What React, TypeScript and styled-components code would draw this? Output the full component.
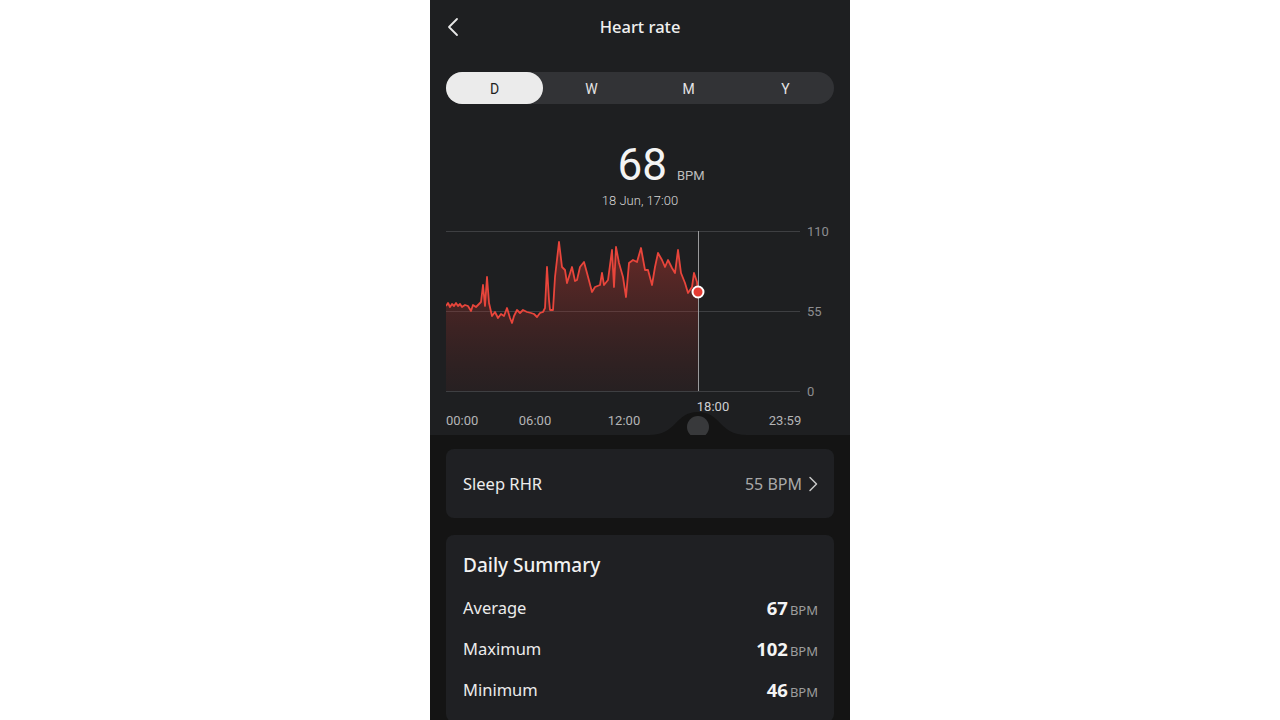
import styled, { createGlobalStyle } from "styled-components";
import { useState } from "react";

const GlobalStyle = createGlobalStyle`
  html, body {
    margin: 0;
    padding: 0;
    background: #ffffff;
  }
  * {
    box-sizing: border-box;
  }
`;

const Phone = styled.div`
  width: 420px;
  height: 720px;
  margin: 0 auto;
  background: #141414;
  overflow: hidden;
  font-family: "Noto Sans", Roboto, sans-serif;
  color: #ececec;
`;

const TopPanel = styled.section`
  background: #1e1f21;
  padding: 0 16px;
  display: flex;
  flex-direction: column;
`;

const Header = styled.header`
  height: 54px;
  display: grid;
  grid-template-columns: 40px 1fr 40px;
  align-items: center;
`;

const BackButton = styled.button`
  border: none;
  background: none;
  padding: 0;
  width: 24px;
  height: 24px;
  color: #e8e8e8;
  display: flex;
  align-items: center;
  cursor: pointer;
`;

const Title = styled.h1`
  margin: 0;
  text-align: center;
  font-size: 16.5px;
  font-weight: 500;
  color: #f0f0f0;
  padding-bottom: 1px;
`;

const Segmented = styled.div`
  margin-top: 18px;
  height: 32px;
  border-radius: 16px;
  background: #323336;
  display: grid;
  grid-template-columns: repeat(4, 1fr);
`;

const Segment = styled.button<{ $active: boolean }>`
  border: none;
  border-radius: 16px;
  padding: 2px 0 0;
  font-family: Roboto, "Noto Sans", sans-serif;
  font-size: 14px;
  background: ${(p) => (p.$active ? "#ebebeb" : "transparent")};
  color: ${(p) => (p.$active ? "#1e1e1e" : "#e4e4e4")};
  cursor: pointer;
`;

const Reading = styled.div`
  margin-top: 35px;
  display: flex;
  flex-direction: column;
  align-items: center;
`;

const ValueLine = styled.div`
  display: flex;
  align-items: baseline;
  gap: 10px;
  padding-left: 42px;
  font-family: Roboto, sans-serif;
`;

const BigValue = styled.span`
  font-size: 44px;
  line-height: 52px;
  font-weight: 400;
  color: #f4f4f4;
`;

const Unit = styled.span`
  font-size: 13px;
  color: #bdbdbd;
`;

const DateText = styled.div`
  margin-top: 2px;
  font-family: Roboto, sans-serif;
  font-size: 13px;
  font-weight: 300;
  color: #d6d6d6;
`;

const ChartSvg = styled.svg`
  display: block;
  margin-top: 17px;
  font-family: Roboto, sans-serif;
`;

const Lower = styled.section`
  padding: 14px 16px;
  display: flex;
  flex-direction: column;
  gap: 17px;
`;

const Card = styled.div`
  background: #1f2023;
  border-radius: 8px;
  padding: 0 16px 0 17px;
`;

const LinkRow = styled.div`
  height: 69px;
  display: flex;
  align-items: center;
  justify-content: space-between;
`;

const RowLabel = styled.span`
  font-size: 16.5px;
  color: #ececec;
`;

const LinkValue = styled.span`
  display: flex;
  align-items: center;
  gap: 6px;
  font-size: 16px;
  color: #a9a9a9;
`;

const SummaryTitle = styled.h2`
  margin: 0;
  padding-top: 17px;
  height: 52px;
  font-size: 19px;
  font-weight: 500;
  color: #f2f2f2;
`;

const SummaryRow = styled.div`
  height: 41px;
  display: flex;
  align-items: center;
  justify-content: space-between;
`;

const StatValue = styled.span`
  display: flex;
  align-items: baseline;
  gap: 2px;
`;

const StatNumber = styled.span`
  font-size: 18.5px;
  font-weight: 700;
  color: #f4f4f4;
`;

const StatUnit = styled.span`
  font-size: 13px;
  color: #9d9d9d;
`;

const CardFoot = styled.div`
  height: 12px;
`;

const points: [number, number][] = [
  [0, 81], [2, 78], [4, 82], [6, 79], [8, 81], [10, 78], [12, 81], [14, 79], [16, 82],
  [19, 80], [22, 81], [25, 86], [27, 80], [30, 82], [33, 79], [35, 77], [37, 60], [39, 81],
  [41, 52], [43, 78], [46, 91], [49, 87], [52, 93], [55, 89], [58, 91], [61, 83], [64, 93],
  [66, 98], [68, 91], [71, 85], [74, 88], [77, 85], [81, 87], [85, 88], [88, 89], [91, 92],
  [94, 88], [97, 87], [99, 83], [101, 42], [103, 75], [104, 85], [107, 85], [109, 52],
  [113, 17], [116, 42], [119, 45], [121, 58], [126, 42], [129, 56], [131, 55], [134, 42],
  [138, 37], [141, 48], [146, 67], [149, 62], [154, 60], [156, 48], [158, 60], [162, 55],
  [166, 25], [168, 62], [170, 22], [173, 38], [177, 52], [180, 72], [183, 38], [187, 35],
  [191, 37], [195, 23], [199, 45], [202, 45], [206, 60], [209, 42], [212, 28], [216, 35],
  [219, 42], [222, 35], [226, 43], [229, 48], [232, 25], [235, 48], [239, 58], [242, 68],
  [246, 62], [248, 48], [251, 57], [252, 67],
];

const linePath = points.map(([x, y], i) => `${i ? "L" : "M"}${x} ${y}`).join(" ");
const areaPath = `${linePath} L252 166 L0 166 Z`;

function HeartChart() {
  const grid = [
    { y: 6, label: "110" },
    { y: 86, label: "55" },
    { y: 166, label: "0" },
  ];
  return (
    <ChartSvg width={388} height={210} viewBox="0 0 388 210">
      <defs>
        <linearGradient id="hrFill" x1="0" y1="17" x2="0" y2="166" gradientUnits="userSpaceOnUse">
          <stop offset="0" stopColor="#d23a30" stopOpacity={0.42} />
          <stop offset="1" stopColor="#8a2a26" stopOpacity={0.08} />
        </linearGradient>
      </defs>
      {grid.map((g) => (
        <g key={g.label}>
          <line x1={0} x2={354} y1={g.y + 0.5} y2={g.y + 0.5} stroke="#3e3f42" strokeWidth={1} />
          <text x={361} y={g.y + 5} fontSize={13} fill="#8d8d90">
            {g.label}
          </text>
        </g>
      ))}
      <path d={areaPath} fill="url(#hrFill)" />
      <path d={linePath} fill="none" stroke="#e8453b" strokeWidth={1.8} strokeLinejoin="round" />
      <line x1={252.5} x2={252.5} y1={6} y2={166} stroke="#9a9a9c" strokeWidth={1} />
      <circle cx={252} cy={67} r={5.5} fill="#e53b33" stroke="#ffffff" strokeWidth={2} />
      <text x={0} y={200} fontSize={13} fill="#b4b4b6">00:00</text>
      <text x={89} y={200} fontSize={13} fill="#b4b4b6" textAnchor="middle">06:00</text>
      <text x={178} y={200} fontSize={13} fill="#b4b4b6" textAnchor="middle">12:00</text>
      <text x={339} y={200} fontSize={13} fill="#b4b4b6" textAnchor="middle">23:59</text>
      <path d="M203 210 C231 210 229 187 252 187 C275 187 273 210 301 210 Z" fill="#141414" />
      <text x={267} y={186} fontSize={13} fill="#cfcfd1" textAnchor="middle">18:00</text>
      <circle cx={252} cy={202} r={11} fill="#38393b" />
    </ChartSvg>
  );
}

const tabs = ["D", "W", "M", "Y"];

const stats = [
  { label: "Average", value: "67" },
  { label: "Maximum", value: "102" },
  { label: "Minimum", value: "46" },
];

export default function App() {
  const [tab, setTab] = useState("D");
  return (
    <>
      <GlobalStyle />
      <Phone>
        <TopPanel>
          <Header>
            <BackButton aria-label="Back">
              <svg width="14" height="20" viewBox="0 0 14 20" fill="none">
                <path d="M11 2 L3 10 L11 18" stroke="currentColor" strokeWidth={1.8} strokeLinecap="round" strokeLinejoin="round" />
              </svg>
            </BackButton>
            <Title>Heart rate</Title>
            <span />
          </Header>
          <Segmented>
            {tabs.map((t) => (
              <Segment key={t} $active={tab === t} onClick={() => setTab(t)}>
                {t}
              </Segment>
            ))}
          </Segmented>
          <Reading>
            <ValueLine>
              <BigValue>68</BigValue>
              <Unit>BPM</Unit>
            </ValueLine>
            <DateText>18 Jun, 17:00</DateText>
          </Reading>
          <HeartChart />
        </TopPanel>
        <Lower>
          <Card>
            <LinkRow>
              <RowLabel>Sleep RHR</RowLabel>
              <LinkValue>
                55 BPM
                <svg width="10" height="16" viewBox="0 0 10 16" fill="none">
                  <path d="M2 1.5 L8.5 8 L2 14.5" stroke="#c8c8c8" strokeWidth={1.5} strokeLinecap="round" strokeLinejoin="round" />
                </svg>
              </LinkValue>
            </LinkRow>
          </Card>
          <Card>
            <SummaryTitle>Daily Summary</SummaryTitle>
            {stats.map((s) => (
              <SummaryRow key={s.label}>
                <RowLabel>{s.label}</RowLabel>
                <StatValue>
                  <StatNumber>{s.value}</StatNumber>
                  <StatUnit>BPM</StatUnit>
                </StatValue>
              </SummaryRow>
            ))}
            <CardFoot />
          </Card>
        </Lower>
      </Phone>
    </>
  );
}
